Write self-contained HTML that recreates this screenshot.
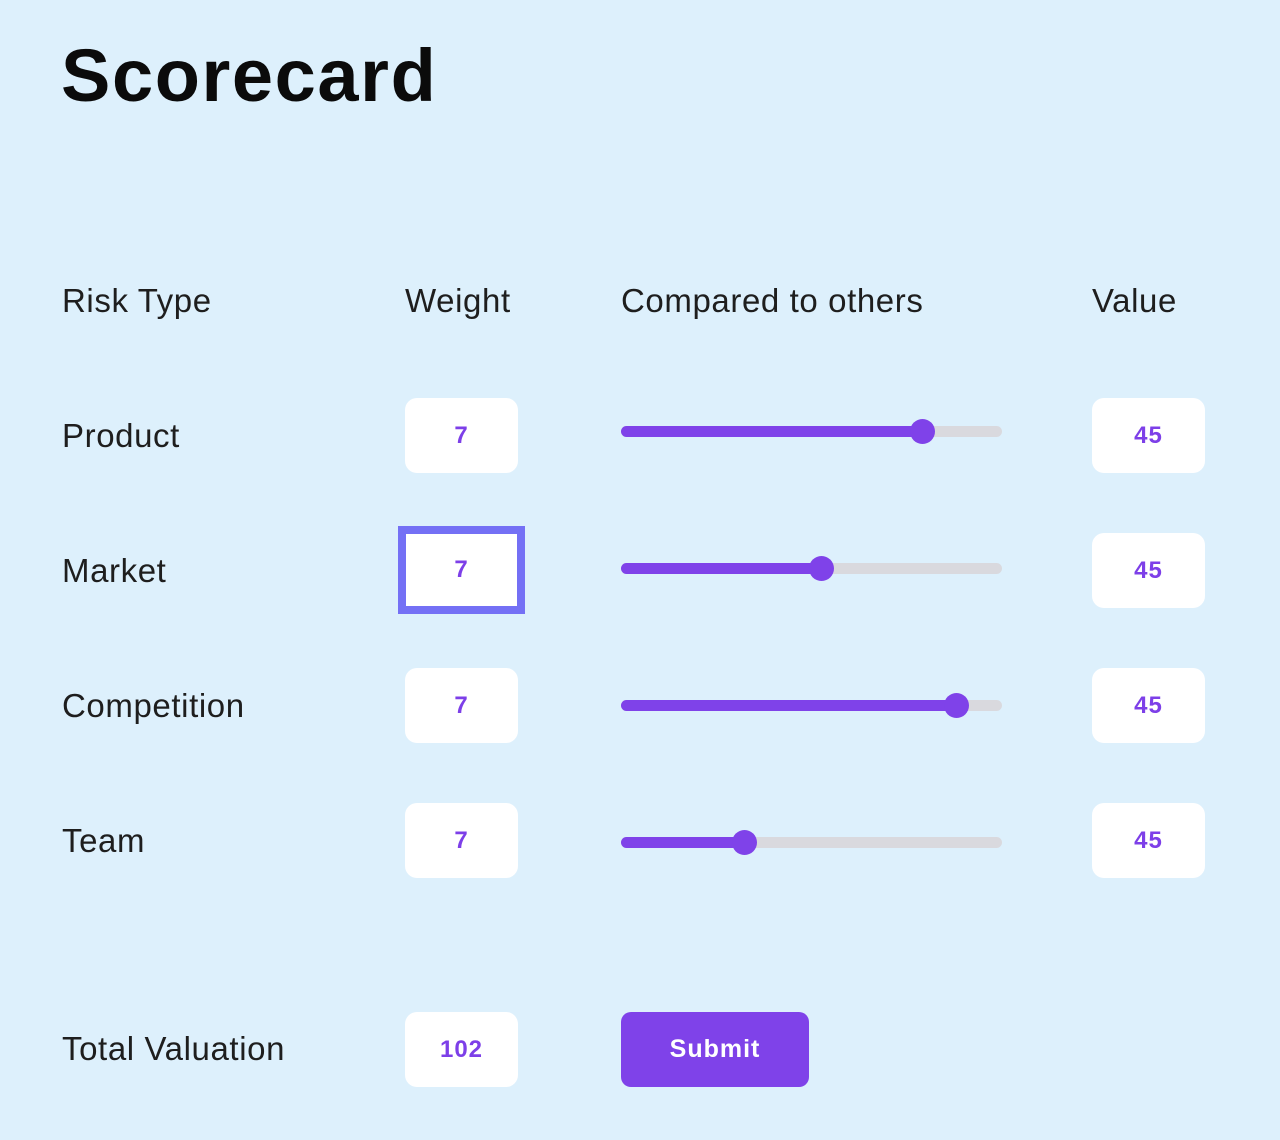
<!DOCTYPE html>
<html><head><style>
body{margin:0;width:1280px;height:1140px;background:#ddf0fc;font-family:"Liberation Sans",sans-serif;position:relative;overflow:hidden}
.a{position:absolute}
h1{position:absolute;left:61px;top:33px;margin:0;font-size:74px;font-weight:bold;color:#0b0b0b;letter-spacing:1.6px}
.l{position:absolute;font-size:33px;color:#1e1e1e;letter-spacing:0.6px}
.b{position:absolute;width:113px;height:75px;background:#fff;border-radius:12px;color:#7d3fe8;font-weight:bold;font-size:24px;display:flex;align-items:center;justify-content:center;letter-spacing:1px}
.t{position:absolute;left:621px;width:381px;height:11px;background:#d9d9de;border-radius:6px}
.f{position:absolute;left:0;top:0;height:11px;background:#7f42e9;border-radius:6px}
.k{position:absolute;top:-7px;width:25px;height:25px;border-radius:50%;background:#7f42e9}
</style></head><body>
<h1>Scorecard</h1>
<div class="l" style="left:62px;top:282px">Risk Type</div>
<div class="l" style="left:405px;top:282px">Weight</div>
<div class="l" style="left:621px;top:282px">Compared to others</div>
<div class="l" style="left:1092px;top:282px">Value</div>

<div class="l" style="left:62px;top:417px">Product</div>
<div class="l" style="left:62px;top:552px">Market</div>
<div class="l" style="left:62px;top:687px">Competition</div>
<div class="l" style="left:62px;top:822px">Team</div>
<div class="l" style="left:62px;top:1030px">Total Valuation</div>

<div class="b" style="left:405px;top:398px">7</div>
<div class="b" style="left:398px;top:526px;width:111px;height:72px;border:8px solid #7470f5;border-radius:0">7</div>
<div class="b" style="left:405px;top:668px">7</div>
<div class="b" style="left:405px;top:803px">7</div>
<div class="b" style="left:405px;top:1012px">102</div>

<div class="b" style="left:1092px;top:398px">45</div>
<div class="b" style="left:1092px;top:533px">45</div>
<div class="b" style="left:1092px;top:668px">45</div>
<div class="b" style="left:1092px;top:803px">45</div>

<div class="t" style="top:426px"><div class="f" style="width:301px"></div><div class="k" style="left:289px"></div></div>
<div class="t" style="top:563px"><div class="f" style="width:200px"></div><div class="k" style="left:188px"></div></div>
<div class="t" style="top:700px"><div class="f" style="width:335px"></div><div class="k" style="left:323px"></div></div>
<div class="t" style="top:837px"><div class="f" style="width:123px"></div><div class="k" style="left:111px"></div></div>

<div class="a" style="left:621px;top:1012px;width:188px;height:75px;background:#7f42e9;border-radius:10px;color:#fff;font-weight:bold;font-size:25px;display:flex;align-items:center;justify-content:center;letter-spacing:1px">Submit</div>
</body></html>
